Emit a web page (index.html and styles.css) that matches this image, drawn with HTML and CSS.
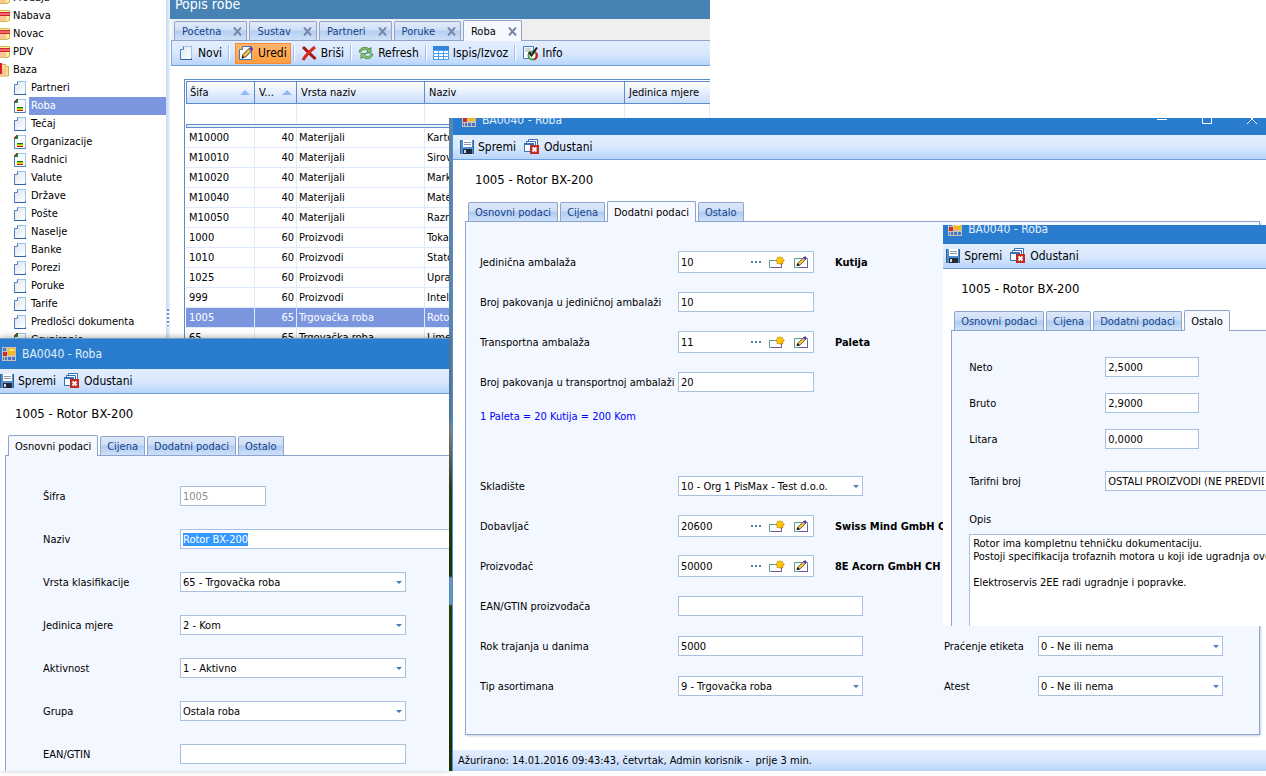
FILE: index.html
```html
<!DOCTYPE html>
<html lang="hr">
<head>
    <meta charset="UTF-8">
    <meta name="viewport" content="width=device-width, initial-scale=1.0">
    <title>Popis robe</title>
    <link rel="stylesheet" href="styles.css">
</head>
<body>
    <!-- Shared icons -->
    <svg class="sprite" xmlns="http://www.w3.org/2000/svg">
        <linearGradient id="paper" x1="0" y1="0" x2="1" y2="1">
            <stop offset="0" stop-color="#dfe5ec"/>
            <stop offset="1" stop-color="#ffffff"/>
        </linearGradient>
        <symbol id="page" viewBox="0 0 12 14">
            <path d="M3.5 .5H11.5V13.5H.5V3.5H3.5Z" fill="url(#paper)" stroke="#4a80bd"/>
            <path d="M4 .5H11.5V12" fill="none" stroke="#9cc5e8"/>
            <path d="M.5 13.5H12" stroke="#2f63ad"/>
        </symbol>
        <symbol id="report" viewBox="0 0 12 14">
            <path d="M3.5 .5H11.5V13.5H.5V3.5H3.5Z" fill="#fbfcfd" stroke="#4a80bd"/>
            <path d="M4 .5H11.5V12" fill="none" stroke="#9cc5e8"/>
            <path d="M0 3 3 0H4V3L3 4H0Z" fill="#1f7a2e"/>
            <path d="M0 3 3 0" stroke="#e02020"/>
            <path d="M3 8h6v1H3z" fill="#1d6b1d"/>
            <path d="M3 9h6v1H3z" fill="#8fd400"/>
            <path d="M3 10h6v1H3z" fill="#f0d800"/>
            <path d="M3 11h6v1H3z" fill="#d01010"/>
        </symbol>
        <symbol id="folder" viewBox="0 0 10 14">
            <path d="M0 1.5H9.5V11.5H8V12.5H0" fill="#fbf09a" stroke="#d3bb5c"/>
            <path d="M0 7H6V12H0Z" fill="#f9c795"/>
            <path d="M0 3H10V7H0Z" fill="#d8202c"/>
            <path d="M0 4H10V6H0Z" fill="#ee6b6b"/>
        </symbol>
        <symbol id="folder-open" viewBox="0 0 10 14">
            <path d="M0 1.5H5.5V3.5H8.5V13H0" fill="#fbe28b" stroke="#d3a85c"/>
            <path d="M3 5H6V13H0V9Z" fill="#f9c795"/>
            <path d="M0 0H2V11H0Z" fill="#d8202c"/>
        </symbol>
        <symbol id="cross" viewBox="0 0 9 9">
            <path d="M1 .5 8 8.5M8 .5 1 8.5" stroke="#7787a8" stroke-width="2"/>
        </symbol>
        <symbol id="edit" viewBox="0 0 16 16">
            <path d="M4.5 1.5H13.5V14.5H1.5V4.5H4.5Z" fill="#fff" stroke="#3b78bd"/>
            <path d="M4 13 5 9.500 11 3.500 13.500 6 7.500 12Z" fill="#f3c33c" stroke="#3b3b5c"/>
            <path d="M11 3.500 12.500 1.500 15.500 4 13.500 6Z" fill="#5a3fb8"/>
            <path d="M3.500 13.500 4.500 10.500 6.500 12.500Z" fill="#222"/>
        </symbol>
        <symbol id="delete" viewBox="0 0 16 16">
            <path d="M2 2C5 5 9 9 14.500 14" stroke="#a81414" stroke-width="3" fill="none"/>
            <path d="M14 2C9 6 5 10 2 15" stroke="#d62a1c" stroke-width="3" fill="none"/>
        </symbol>
        <symbol id="refresh" viewBox="0 0 16 16">
            <path d="M1 7C2 2 8 1 11 4L13 2.5V8H8L10 6C7 4 4 4 3 7Z" fill="#7fbf6e" stroke="#3e8240" stroke-width=".8"/>
            <path d="M15 9C14 14 8 15 5 12L3 13.5V8.5H8L6.5 10.5C9 12 12 12 13 9Z" fill="#8fc97e" stroke="#3e8240" stroke-width=".8"/>
        </symbol>
        <symbol id="table" viewBox="0 0 16 14">
            <path d="M0 0H16V14H0Z" fill="#4a9fe8"/>
            <path d="M0 0H16V4H0Z" fill="#2f86dc"/>
            <path d="M1 5h4v2H1zM6 5h4v2H6zM11 5h4v2h-4zM1 8h4v2H1zM6 8h4v2H6zM11 8h4v2h-4zM1 11h4v2H1zM6 11h4v2H6zM11 11h4v2h-4z" fill="#fff"/>
        </symbol>
        <symbol id="info" viewBox="0 0 16 16">
            <path d="M1.5 1.5H11.5V13.5H1.5Z" fill="#fff" stroke="#3b78bd"/>
            <path d="M3 4H9M3 6H8" stroke="#9aa7b8"/>
            <circle cx="10.5" cy="10.5" r="4" fill="#fff" stroke="#4b9b4b" stroke-width="2"/>
            <path d="M14 8A4 4 0 0 1 12 14.5" fill="none" stroke="#cc2222" stroke-width="2"/>
            <path d="M7 7 9.5 10.5 15 2.5" fill="none" stroke="#221a1a" stroke-width="2"/>
        </symbol>
        <symbol id="app" viewBox="0 0 14 14">
            <path d="M0 0H14V14H0Z" fill="#c9c2b4"/>
            <path d="M1 5H5V9H1Z" fill="#c9302c"/>
            <path d="M6 1H13V8H6Z" fill="#f2b81c"/>
            <path d="M7 2H12V4H7Z" fill="#fbe07c"/>
            <path d="M6 10H9V13H6ZM10 10H13V13H10Z" fill="#3f74d0"/>
            <path d="M1 1H4V4H1ZM1 10H2V13H1ZM3 10H5V13H3Z" fill="#3f74d0"/>
        </symbol>
        <symbol id="save" viewBox="0 0 14 14">
            <path d="M0 0H14V14H0Z" fill="#4f8fd0"/>
            <path d="M0 0H1V14H0ZM13 0H14V14H13Z" fill="#2f63a0"/>
            <path d="M3 0H12V7H3Z" fill="#fff"/>
            <path d="M4 2.5H11M4 4.5H11" stroke="#8c95a0"/>
            <path d="M3 9H12V14H3Z" fill="#222a38"/>
            <path d="M4 10H6V13H4Z" fill="#cfd8e4"/>
        </symbol>
        <symbol id="cancel" viewBox="0 0 16 16">
            <path d="M4.5 .5H13.5V7H4.5Z" fill="#fff" stroke="#3b6fb8"/>
            <path d="M2.5 2.5H11.5V9H2.5Z" fill="#fff" stroke="#3b6fb8"/>
            <path d="M.5 4.5H9.5V12.5H.5Z" fill="#fff" stroke="#3b6fb8"/>
            <path d="M0 4H10V6H0Z" fill="#3b6fb8"/>
            <path d="M6 6H15V15H6Z" fill="#c22a20"/>
            <path d="M8.5 8.5 12.5 12.5M12.5 8.5 8.5 12.5" stroke="#fff" stroke-width="2"/>
        </symbol>
        <symbol id="new-item" viewBox="0 0 16 12">
            <path d="M.5 4.5H12.5V11.5H.5Z" fill="#fff" stroke="#5a9494"/>
            <path d="M3 11.5H12.5V7" fill="none" stroke="#6c5aa0"/>
            <path d="M11 0 12.2 1.8 14.2 .8 14 3 16 4.5 14 6 14.5 8.3 12.2 7.4 11 9 9.8 7.4 7.5 8.3 8 6 6 4.5 8 3 7.8 .8 9.8 1.8Z" fill="#c98a1e"/>
            <circle cx="11" cy="4.5" r="3" fill="#fdc800"/>
        </symbol>
        <symbol id="edit-item" viewBox="0 0 14 12">
            <path d="M.5 2.5H13.5V11.5H.5Z" fill="#fff" stroke="#5a9494"/>
            <path d="M5 11.5H13.5V4" fill="none" stroke="#6c5aa0"/>
            <path d="M3 9.5 4 7 9.5 1.5 11.5 3.5 6 9Z" fill="#f3c33c" stroke="#5a4a3a" stroke-width=".8"/>
            <path d="M9 2 11 0 13 2 11 4Z" fill="#5a3fb8"/>
            <path d="M2.5 10 3.5 7 6 9.5Z" fill="#111"/>
        </symbol>
    </svg>

    <div class="desktop">
        <!-- Main window: menu tree and list -->
        <div class="window main-window">
            <ul class="tree">
                <li class="group"><svg><use href="#folder"/></svg><a href="#">Prodaja</a></li>
                <li class="group"><svg><use href="#folder"/></svg><a href="#">Nabava</a></li>
                <li class="group"><svg><use href="#folder"/></svg><a href="#">Novac</a></li>
                <li class="group"><svg><use href="#folder"/></svg><a href="#">PDV</a></li>
                <li class="group"><svg><use href="#folder-open"/></svg><a href="#">Baza</a></li>
                <li><svg><use href="#page"/></svg><a href="#">Partneri</a></li>
                <li><svg><use href="#report"/></svg><a href="#" class="active">Roba</a></li>
                <li><svg><use href="#page"/></svg><a href="#">Tečaj</a></li>
                <li><svg><use href="#report"/></svg><a href="#">Organizacije</a></li>
                <li><svg><use href="#report"/></svg><a href="#">Radnici</a></li>
                <li><svg><use href="#page"/></svg><a href="#">Valute</a></li>
                <li><svg><use href="#page"/></svg><a href="#">Države</a></li>
                <li><svg><use href="#page"/></svg><a href="#">Pošte</a></li>
                <li><svg><use href="#page"/></svg><a href="#">Naselje</a></li>
                <li><svg><use href="#page"/></svg><a href="#">Banke</a></li>
                <li><svg><use href="#page"/></svg><a href="#">Porezi</a></li>
                <li><svg><use href="#page"/></svg><a href="#">Poruke</a></li>
                <li><svg><use href="#page"/></svg><a href="#">Tarife</a></li>
                <li><svg><use href="#page"/></svg><a href="#">Predlošci dokumenta</a></li>
                <li><svg><use href="#report"/></svg><a href="#">Grupiranje</a></li>
            </ul>
            <div class="splitter"><span class="grip"></span></div>
            <div class="list-pane">
                <div class="list-title">Popis robe</div>
                <div class="doc-tabs">
                    <div class="doc-tab"><button>Početna</button><button class="close" aria-label="Zatvori"><svg><use href="#cross"/></svg></button></div>
                    <div class="doc-tab"><button>Sustav</button><button class="close" aria-label="Zatvori"><svg><use href="#cross"/></svg></button></div>
                    <div class="doc-tab"><button>Partneri</button><button class="close" aria-label="Zatvori"><svg><use href="#cross"/></svg></button></div>
                    <div class="doc-tab"><button>Poruke</button><button class="close" aria-label="Zatvori"><svg><use href="#cross"/></svg></button></div>
                    <div class="doc-tab active"><button>Roba</button><button class="close" aria-label="Zatvori"><svg><use href="#cross"/></svg></button></div>
                </div>
                <div class="toolbar list-toolbar">
                    <button><svg class="page-icon"><use href="#page"/></svg>Novi</button>
                    <span class="sep"></span>
                    <button class="hot"><svg><use href="#edit"/></svg>Uredi</button>
                    <span class="sep"></span>
                    <button><svg><use href="#delete"/></svg>Briši</button>
                    <span class="sep"></span>
                    <button><svg><use href="#refresh"/></svg>Refresh</button>
                    <span class="sep"></span>
                    <button><svg><use href="#table"/></svg>Ispis/Izvoz</button>
                    <span class="sep"></span>
                    <button><svg><use href="#info"/></svg>Info</button>
                </div>
                <div class="grid">
                    <table>
                        <colgroup>
                            <col class="c-code"><col class="c-type"><col class="c-kind"><col class="c-name"><col>
                        </colgroup>
                        <thead>
                            <tr><th class="sorted">Šifa</th><th class="sorted">V...</th><th>Vrsta naziv</th><th>Naziv</th><th>Jedinica mjere</th></tr>
                            <tr class="filter"><td></td><td></td><td></td><td></td><td></td></tr>
                            <tr class="line"><td colspan="5"></td></tr>
                        </thead>
                        <tbody>
                            <tr><td>M10000</td><td>40</td><td>Materijali</td><td>Karton</td><td></td></tr>
                            <tr><td>M10010</td><td>40</td><td>Materijali</td><td>Sirovina</td><td></td></tr>
                            <tr><td>M10020</td><td>40</td><td>Materijali</td><td>Marker</td><td></td></tr>
                            <tr><td>M10040</td><td>40</td><td>Materijali</td><td>Materijal</td><td></td></tr>
                            <tr><td>M10050</td><td>40</td><td>Materijali</td><td>Razno</td><td></td></tr>
                            <tr><td>1000</td><td>60</td><td>Proizvodi</td><td>Tokar</td><td></td></tr>
                            <tr><td>1010</td><td>60</td><td>Proizvodi</td><td>Stator</td><td></td></tr>
                            <tr><td>1025</td><td>60</td><td>Proizvodi</td><td>Upravljač</td><td></td></tr>
                            <tr><td>999</td><td>60</td><td>Proizvodi</td><td>Intel</td><td></td></tr>
                            <tr class="selected"><td>1005</td><td>65</td><td>Trgovačka roba</td><td>Rotor</td><td></td></tr>
                            <tr><td>65</td><td>65</td><td>Trgovačka roba</td><td>Limenka</td><td></td></tr>
                        </tbody>
                    </table>
                </div>
            </div>
        </div>

        <div class="wallpaper"></div>

        <!-- Osnovni podaci -->
        <div class="window basic-window">
            <div class="titlebar"><svg><use href="#app"/></svg>BA0040 - Roba</div>
            <div class="toolbar">
                <button><svg class="save"><use href="#save"/></svg>Spremi</button>
                <button><svg><use href="#cancel"/></svg>Odustani</button>
            </div>
            <h1>1005 - Rotor BX-200</h1>
            <div class="tabs">
                <button class="active">Osnovni podaci</button><button>Cijena</button><button>Dodatni podaci</button><button>Ostalo</button>
            </div>
            <div class="panel">
                <div class="row"><label for="sifra">Šifra</label><input class="short" id="sifra" value="1005" disabled></div>
                <div class="row"><label for="naziv">Naziv</label><input class="full" id="naziv" value="Rotor BX-200"></div>
                <div class="row"><label for="vrsta">Vrsta klasifikacije</label><div class="combo"><select id="vrsta"><option>65 - Trgovačka roba</option></select></div></div>
                <div class="row"><label for="jedinica">Jedinica mjere</label><div class="combo"><select id="jedinica"><option>2 - Kom</option></select></div></div>
                <div class="row"><label for="aktivnost">Aktivnost</label><div class="combo"><select id="aktivnost"><option>1 - Aktivno</option></select></div></div>
                <div class="row"><label for="grupa">Grupa</label><div class="combo"><select id="grupa"><option>Ostala roba</option></select></div></div>
                <div class="row"><label for="ean">EAN/GTIN</label><input id="ean"></div>
            </div>
        </div>

        <!-- Dodatni podaci -->
        <div class="window extra-window">
            <div class="titlebar"><svg><use href="#app"/></svg>BA0040 - Roba
                <div class="controls">
                    <button aria-label="Smanji"><svg viewBox="0 0 12 12"><path d="M1 5.5H11"/></svg></button>
                    <button aria-label="Povećaj"><svg viewBox="0 0 12 12"><path d="M1.5 .5H10.5V9.5H1.5Z"/></svg></button>
                    <button aria-label="Zatvori"><svg viewBox="0 0 12 12"><path d="M1 0 11 10M11 0 1 10"/></svg></button>
                </div>
            </div>
            <div class="toolbar">
                <button><svg class="save"><use href="#save"/></svg>Spremi</button>
                <button><svg><use href="#cancel"/></svg>Odustani</button>
            </div>
            <h1>1005 - Rotor BX-200</h1>
            <div class="tabs">
                <button>Osnovni podaci</button><button>Cijena</button><button class="active">Dodatni podaci</button><button>Ostalo</button>
            </div>
            <div class="panel">
                <div class="row">
                    <label for="jed-amb">Jedinična ambalaža</label>
                    <div class="lookup"><input id="jed-amb" value="10"><button aria-label="Traži"><i class="dots"></i></button><button aria-label="Novi"><svg class="new"><use href="#new-item"/></svg></button><button aria-label="Uredi"><svg><use href="#edit-item"/></svg></button></div>
                    <b>Kutija</b>
                </div>
                <div class="row"><label for="pak-jed">Broj pakovanja u jediničnoj ambalaži</label><input class="medium" id="pak-jed" value="10"></div>
                <div class="row">
                    <label for="tr-amb">Transportna ambalaža</label>
                    <div class="lookup"><input id="tr-amb" value="11"><button aria-label="Traži"><i class="dots"></i></button><button aria-label="Novi"><svg class="new"><use href="#new-item"/></svg></button><button aria-label="Uredi"><svg><use href="#edit-item"/></svg></button></div>
                    <b>Paleta</b>
                </div>
                <div class="row"><label for="pak-tr">Broj pakovanja u transportnoj ambalaži</label><input class="medium" id="pak-tr" value="20"></div>
                <p class="formula">1 Paleta = 20 Kutija = 200 Kom</p>
                <div class="row"><label for="skladiste">Skladište</label><div class="combo"><select id="skladiste"><option>10 - Org 1 PisMax - Test d.o.o.</option></select></div></div>
                <div class="row">
                    <label for="dobavljac">Dobavljač</label>
                    <div class="lookup"><input id="dobavljac" value="20600"><button aria-label="Traži"><i class="dots"></i></button><button aria-label="Novi"><svg class="new"><use href="#new-item"/></svg></button><button aria-label="Uredi"><svg><use href="#edit-item"/></svg></button></div>
                    <b>Swiss Mind GmbH CH</b>
                </div>
                <div class="row">
                    <label for="proizvodac">Proizvođač</label>
                    <div class="lookup"><input id="proizvodac" value="50000"><button aria-label="Traži"><i class="dots"></i></button><button aria-label="Novi"><svg class="new"><use href="#new-item"/></svg></button><button aria-label="Uredi"><svg><use href="#edit-item"/></svg></button></div>
                    <b>8E Acorn GmbH CH</b>
                </div>
                <div class="row"><label for="ean-pr">EAN/GTIN proizvođača</label><input id="ean-pr"></div>
                <div class="row">
                    <label for="rok">Rok trajanja u danima</label><input id="rok" value="5000">
                    <label class="second" for="etiketa">Praćenje etiketa</label><div class="combo"><select id="etiketa"><option>0 - Ne ili nema</option></select></div>
                </div>
                <div class="row">
                    <label for="tip">Tip asortimana</label><div class="combo"><select id="tip"><option>9 - Trgovačka roba</option></select></div>
                    <label class="second" for="atest">Atest</label><div class="combo"><select id="atest"><option>0 - Ne ili nema</option></select></div>
                </div>
            </div>
            <div class="statusbar">Ažurirano: 14.01.2016 09:43:43, četvrtak, Admin korisnik -&nbsp; prije 3 min.</div>
        </div>

        <!-- Ostalo -->
        <div class="window other-window">
            <div class="titlebar"><svg><use href="#app"/></svg>BA0040 - Roba</div>
            <div class="toolbar">
                <button><svg class="save"><use href="#save"/></svg>Spremi</button>
                <button><svg><use href="#cancel"/></svg>Odustani</button>
            </div>
            <h1>1005 - Rotor BX-200</h1>
            <div class="tabs">
                <button>Osnovni podaci</button><button>Cijena</button><button>Dodatni podaci</button><button class="active">Ostalo</button>
            </div>
            <div class="panel">
                <div class="row"><label for="neto">Neto</label><input id="neto" value="2,5000"></div>
                <div class="row"><label for="bruto">Bruto</label><input id="bruto" value="2,9000"></div>
                <div class="row spaced"><label for="litara">Litara</label><input id="litara" value="0,0000"></div>
                <div class="row spaced"><label for="tarifni">Tarifni broj</label><input class="full" id="tarifni" value="OSTALI PROIZVODI (NE PREDVIDENO)"></div>
                <label class="opis" for="opis">Opis</label>
                <textarea id="opis" wrap="off">Rotor ima kompletnu tehničku dokumentaciju.
Postoji specifikacija trofaznih motora u koji ide ugradnja ovog

Elektroservis 2EE radi ugradnje i popravke.</textarea>
            </div>
        </div>
    </div>

    <script>
        // Start with the item name selected
        var naziv = document.getElementById('naziv');
        naziv.focus();
        naziv.select();
    </script>
</body>
</html>
```
FILE: styles.css
```css
* {
    box-sizing: border-box;
}

body {
    margin: 0;
    background-color: #ffffff;
    color: #000000;
    font-family: "DejaVu Sans Condensed", Tahoma, sans-serif;
    font-size: 11px;
}

button, input, select, textarea {
    font: inherit;
    color: inherit;
    margin: 0;
    border-radius: 0;
    outline: none;
}

button {
    border: none;
    background: none;
    padding: 0;
    white-space: nowrap;
}

a {
    color: inherit;
    text-decoration: none;
}

svg {
    display: block;
    flex: none;
}

.sprite {
    position: absolute;
    width: 0;
    height: 0;
}

.desktop {
    position: relative;
    min-height: 100vh;
    overflow: hidden;
}

/* Windows lie freely on the desktop */
.window {
    position: absolute;
    background-color: #ffffff;
    overflow: hidden;
}

.main-window {
    left: 0;
    top: 0;
    width: 56.1%;
    display: flex;
}

.basic-window {
    left: 0;
    top: 338px;
    width: 35.5%;
    border-top: 1px solid #6c9cc8;
    box-shadow: 0 -1px 6px rgba(0, 0, 0, 0.3);
}

.extra-window {
    left: 35.7%;
    right: 0;
    top: 118px;
    border-left: 1px solid #4a90d9;
}

.other-window {
    left: 74.5%;
    right: 0;
    top: 225px;
}

.wallpaper {
    position: absolute;
    left: 35.5%;
    top: 118px;
    bottom: 5px;
    width: 3px;
    background: linear-gradient(#5d83a6 0, #5d83a6 300px, #8b8f90 310px, #555b50 350px, #2f4210 370px, #23350a 458px, #6f9fd0 460px, #6f9fd0 486px, #2c4408 488px, #1e3206 100%);
}

/* Menu tree */
.tree {
    list-style: none;
    margin: -11px 0 0;
    padding: 0 0 20px;
    width: 166px;
    flex: none;
}

.tree li {
    display: flex;
    align-items: center;
    height: 18px;
    padding-left: 14px;
}

.tree svg {
    width: 12px;
    height: 14px;
    margin-right: 3px;
}

.tree a {
    flex: 1;
    line-height: 18px;
    padding-left: 2px;
}

.tree .group {
    padding-left: 0;
}

.tree .group svg {
    width: 10px;
    margin-right: 1px;
}

.tree .active {
    background-color: #7b96df;
    color: #ffffff;
}

.splitter {
    width: 4px;
    flex: none;
    background: linear-gradient(to right, #c5daf5, #e6f0fd);
}

.grip {
    display: block;
    width: 2px;
    height: 17px;
    margin: 309px 1px 0;
    background: repeating-linear-gradient(#6f90c4 0, #6f90c4 2px, #ffffff 2px, #ffffff 4px);
}

/* List pane */
.list-pane {
    flex: 1;
    min-width: 0;
}

.list-title {
    height: 29px;
    margin-top: -10px;
    padding-left: 5px;
    background-color: #4682b4;
    color: #ffffff;
    font-size: 14px;
    line-height: 29px;
}

.doc-tabs {
    display: flex;
    align-items: flex-end;
    gap: 2px;
    height: 22px;
    margin-left: 1px;
    padding-left: 3px;
    background-color: #efefef;
    border-bottom: 1px solid #8ea4cd;
}

.doc-tab {
    display: flex;
    align-items: center;
    height: 19px;
    padding: 0 4px 0 7px;
    gap: 12px;
    border: 1px solid #8ea4cd;
    border-bottom: none;
    border-radius: 2px 2px 0 0;
    background: linear-gradient(#e0ebfb, #cfdff6 45%, #b5cef0 50%, #cde0f8);
    color: #15428b;
}

.doc-tab.active {
    height: 21px;
    margin-bottom: -1px;
    background: #f5f8fe;
    color: #000000;
}

.close svg {
    width: 9px;
    height: 9px;
}

.toolbar {
    display: flex;
    align-items: center;
    height: 25px;
    padding-left: 7px;
    gap: 8px;
    background: linear-gradient(#e3eefe, #d9e8fd 50%, #b9d5fc);
    border-bottom: 1px solid #6f9ddb;
    font-size: 12px;
}

.toolbar button {
    display: flex;
    align-items: center;
    gap: 4px;
    height: 21px;
}

.toolbar svg {
    width: 16px;
    height: 16px;
}

.toolbar .save {
    width: 14px;
    height: 14px;
}

.list-toolbar {
    margin-left: 1px;
    padding-left: 8px;
    gap: 6px;
    border-left: 1px solid #8ea4cd;
}

.list-toolbar .page-icon {
    width: 12px;
    height: 14px;
    margin-right: 2px;
}

.toolbar .hot {
    margin: 0 -4px 0 -1px;
    padding: 0 3px 0 2px;
    border: 1px solid #f08a3c;
    background: linear-gradient(#ffb56b, #ff9d3e);
}

.sep {
    width: 2px;
    height: 16px;
    border-left: 1px solid #9ebfee;
    border-right: 1px solid #ffffff;
}

.grid {
    margin: 13px 0 0 14px;
    padding: 1px 0 0 1px;
    border-top: 1px solid #5e8bc9;
    border-left: 1px solid #5e8bc9;
}

.grid table {
    width: 100%;
    table-layout: fixed;
    border-collapse: separate;
    border-spacing: 0;
}

.c-code { width: 69px; }
.c-type { width: 42px; }
.c-kind { width: 128px; }
.c-name { width: 200px; }

.grid th {
    height: 23px;
    padding: 0 4px;
    border: 1px solid #5e8bc9;
    border-left: none;
    background: linear-gradient(#ffffff, #c9ddfb);
    font-weight: normal;
    text-align: left;
}

.grid th:first-child {
    border-left: 1px solid #5e8bc9;
    padding-left: 3px;
}

.grid th:last-child {
    border-right: none;
}

/* Sort arrow at the right of the heading */
.grid .sorted::after {
    content: "";
    float: right;
    margin-top: 4px;
    border: 5px solid transparent;
    border-top: none;
    border-bottom-color: #8db9f5;
}

.grid td {
    height: 20px;
    padding: 0 2px;
    border-right: 1px solid #dfebfb;
    border-bottom: 1px solid #dfebfb;
    white-space: nowrap;
    overflow: hidden;
}

.grid td:first-child {
    padding-left: 3px;
}

.grid td:nth-child(2) {
    text-align: right;
}

.grid .filter td {
    border-bottom: none;
}

.grid .line td {
    height: 4px;
    padding: 0;
    border: 1px solid #5e8bc9;
    background-color: #e8f1fd;
}

.grid .selected td {
    background-color: #7b96df;
    color: #ffffff;
}

/* Item windows */
.titlebar {
    display: flex;
    align-items: center;
    height: 30px;
    padding-left: 2px;
    background-color: #2a7dce;
    color: #e3effa;
    font-size: 12px;
}

.titlebar > svg {
    width: 14px;
    height: 14px;
    margin-right: 6px;
}

.controls {
    display: flex;
    gap: 33px;
    margin-left: auto;
    padding-right: 8px;
}

.controls svg {
    width: 12px;
    height: 12px;
    fill: none;
    stroke: #ffffff;
}

h1 {
    margin: 0;
    font-size: 13px;
    font-weight: normal;
    line-height: 40px;
}

.tabs {
    display: flex;
    align-items: flex-end;
    gap: 2px;
    height: 21px;
    padding-left: 3px;
}

.tabs button {
    height: 19px;
    padding: 0 6px;
    border: 1px solid #8ea4cd;
    border-bottom: none;
    border-radius: 2px 2px 0 0;
    background: linear-gradient(#dbe7f9, #cfdff6 45%, #b0cbf0 50%, #cde0f8);
    color: #15428b;
}

.tabs .active {
    position: relative;
    z-index: 1;
    height: 21px;
    margin-bottom: -1px;
    background: #f5f8fe;
    color: #000000;
}

.panel {
    border: 1px solid #8ea4cd;
    background-color: #f3f7ff;
}

.row {
    display: flex;
    align-items: center;
}

input, select, textarea {
    border: 1px solid #a9c1de;
    background-color: #ffffff;
}

input, select {
    width: 185px;
    height: 20px;
    padding: 0 2px;
}

input:disabled {
    color: #8d8d8d;
}

input::selection {
    background-color: #3399ff;
    color: #ffffff;
}

select {
    appearance: none;
}

.combo {
    position: relative;
}

/* Drop-down arrow */
.combo::after {
    content: "";
    position: absolute;
    right: 4px;
    top: 9px;
    border: 3px solid transparent;
    border-bottom: none;
    border-top-color: #4a78b5;
    pointer-events: none;
}

.row .full {
    flex: 1;
    min-width: 0;
    border-right: none;
}

/* Osnovni podaci */
.basic-window .toolbar {
    padding-left: 0;
}

.basic-window h1 {
    padding-left: 15px;
}

.basic-window .tabs {
    margin-left: 5px;
}

.basic-window .panel {
    margin-left: 5px;
    padding: 30px 0 7px 37px;
    border-right: none;
    border-bottom: none;
}

.basic-window .row {
    margin-bottom: 23px;
}

.basic-window .row:last-child {
    margin-bottom: 0;
}

.basic-window label {
    width: 137px;
}

.basic-window input,
.basic-window select {
    width: 226px;
}

.basic-window .short {
    width: 86px;
}

/* Dodatni podaci */
.extra-window .titlebar {
    margin-top: -13px;
    padding-left: 9px;
}

.extra-window h1 {
    padding-left: 22px;
}

.extra-window .tabs {
    margin-left: 12px;
}

.extra-window .panel {
    margin: 0 6px 15px 12px;
    padding: 20px 0 28px 14px;
    box-shadow: 1px 1px 2px #c3cfe4;
}

.extra-window .row {
    height: 40px;
}

.extra-window label {
    width: 198px;
    flex: none;
    white-space: nowrap;
}

.extra-window .medium {
    width: 136px;
}

.extra-window .second {
    width: 94px;
    margin-left: 81px;
}

.extra-window b {
    margin-left: 21px;
    white-space: nowrap;
}

.lookup {
    display: flex;
    align-items: center;
    width: 136px;
    height: 22px;
    padding-right: 4px;
    border: 1px solid #a9c1de;
    background-color: #ffffff;
}

.lookup input {
    width: 72px;
    border: none;
}

.lookup svg {
    width: 14px;
    height: 12px;
    margin-left: 9px;
}

.lookup .new {
    width: 16px;
    margin-left: 8px;
}

.dots {
    display: block;
    width: 10px;
    height: 2px;
    background: repeating-linear-gradient(to right, #4a78b5 0, #4a78b5 2px, #ffffff 2px, #ffffff 4px);
}

.formula {
    height: 30px;
    margin: 0 0 34px;
    line-height: 30px;
    color: #0000ff;
}

.statusbar {
    height: 21px;
    padding-left: 5px;
    background: linear-gradient(#e3eefe, #d6e6fd 50%, #b9d5fc);
    line-height: 21px;
}

/* Ostalo */
.other-window .titlebar {
    margin-top: -11px;
    padding-left: 5px;
}

.other-window .toolbar {
    padding-left: 3px;
}

.other-window h1 {
    padding-left: 18px;
}

.other-window .tabs {
    margin-left: 8px;
}

.other-window .panel {
    margin-left: 8px;
    padding: 26px 0 0 17px;
    border-right: none;
    border-bottom: none;
}

.other-window .row {
    margin-bottom: 16px;
}

.other-window .spaced {
    margin-bottom: 22px;
}

.other-window .row label {
    width: 136px;
}

.other-window .row input {
    width: 94px;
}

.opis {
    display: block;
    line-height: 14px;
}

textarea {
    display: block;
    width: 100%;
    height: 92px;
    margin-top: 7px;
    padding: 2px 3px;
    border-right: none;
    border-bottom: none;
    line-height: 13px;
    resize: none;
    overflow: hidden;
}
```
